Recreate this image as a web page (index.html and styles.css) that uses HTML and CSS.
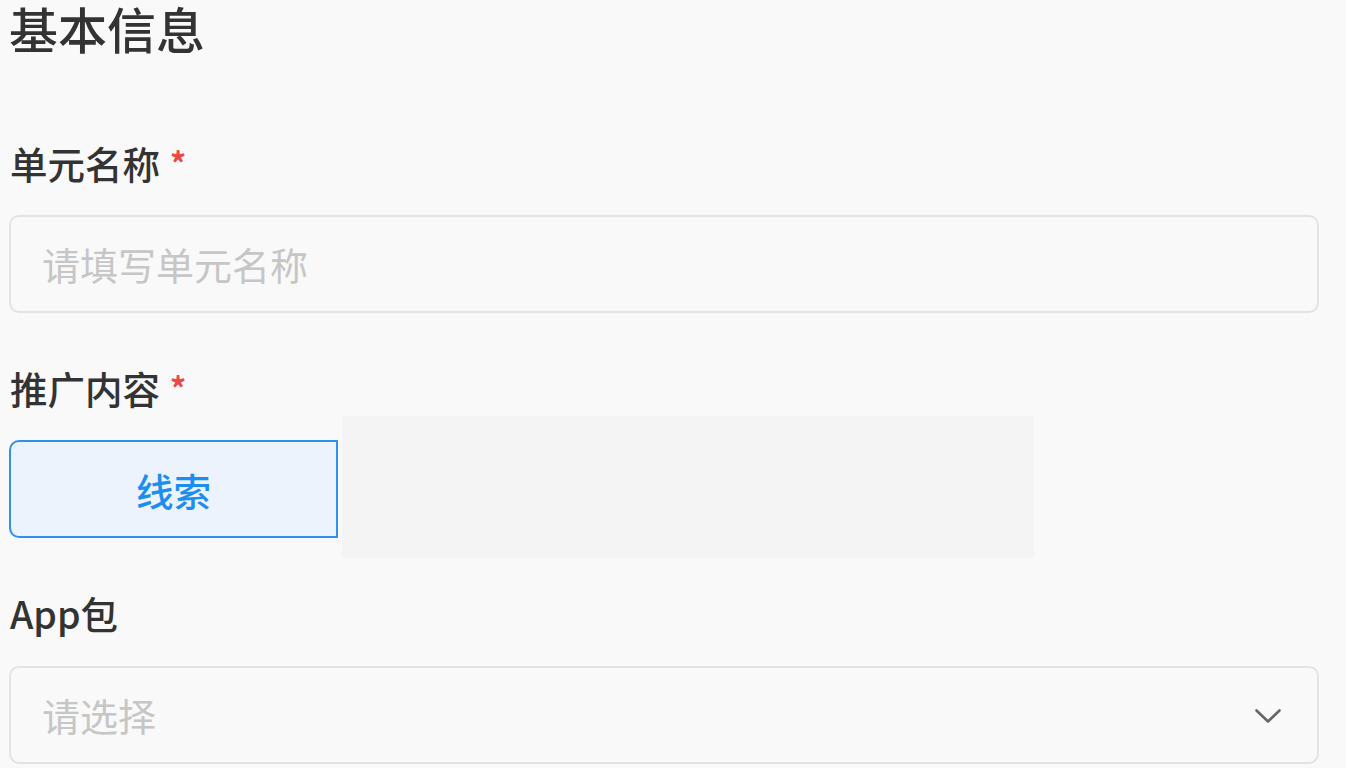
FILE: index.html
```html
<!DOCTYPE html>
<html lang="zh-CN">
<head>
<meta charset="utf-8">
<title>基本信息</title>
<link rel="stylesheet" href="styles.css">
</head>
<body>
<div class="page">
  <h1 class="title">基本信息</h1>

  <div class="field field-first">
    <div class="label">单元名称<span class="req">*</span></div>
    <div class="input"><span class="placeholder">请填写单元名称</span></div>
  </div>

  <div class="field">
    <div class="label">推广内容<span class="req">*</span></div>
    <div class="options">
      <div class="option active">线索</div>
      <div class="blank"></div>
    </div>
  </div>

  <div class="field field-last">
    <div class="label">App包</div>
    <div class="input select">
      <span class="placeholder">请选择</span>
      <svg class="chev" width="28" height="20" viewBox="0 0 28 20"><path d="M2.5 4.5 L14 15.5 L25.5 4.5" fill="none" stroke="#666" stroke-width="2.6" stroke-linecap="round" stroke-linejoin="round"/></svg>
    </div>
  </div>
</div>
</body>
</html>
```

FILE: styles.css
```css
html, body {
  margin: 0;
  padding: 0;
  background: #f9f9f9;
}
body {
  font-family: "Noto Sans CJK SC", "Noto Sans", sans-serif;
  color: #333;
  overflow: hidden;
  height: 768px;
}
.page {
  padding-left: 9px;
  width: 1310px;
}
.title {
  margin: 0;
  font-size: 49px;
  line-height: 56px;
  font-weight: 500;
  color: #333;
}
.field-first {
  margin-top: 87px;
}
.field {
  margin-bottom: 55px;
}
.field-last {
  margin-bottom: 0;
}
.label {
  font-size: 37.5px;
  line-height: 44px;
  height: 44px;
  font-weight: 500;
  color: #333;
  padding-left: 1px;
  display: flex;
  align-items: center;
  position: relative;
  top: -2px;
}
.req {
  color: #f04848;
  font-size: 32px;
  font-weight: 700;
  margin-left: 10px;
  position: relative;
  top: -1px;
}
.input {
  margin-top: 28px;
  height: 98px;
  box-sizing: border-box;
  border: 2px solid #e3e3e3;
  border-radius: 10px;
  background: #f9f9f9;
  display: flex;
  align-items: center;
  padding-left: 31px;
  padding-right: 35px;
}
.placeholder {
  font-size: 38px;
  color: #c6c6c6;
  line-height: 44px;
}
.select {
  justify-content: space-between;
  margin-top: 29px;
}
.chev {
  display: block;
  margin-top: 2px;
}
.options {
  margin-top: 28px;
  display: flex;
  align-items: flex-start;
  height: 98px;
}
.option {
  width: 329px;
  height: 98px;
  box-sizing: border-box;
  border: 2.5px solid #2f90f0;
  border-radius: 10px 0 0 10px;
  background: #ecf3fc;
  color: #1c8ef0;
  font-size: 37.5px;
  font-weight: 500;
  display: flex;
  align-items: center;
  justify-content: center;
}
.blank {
  margin-left: 4px;
  margin-top: -24px;
  width: 692px;
  height: 142px;
  background: #f4f4f4;
}
```
